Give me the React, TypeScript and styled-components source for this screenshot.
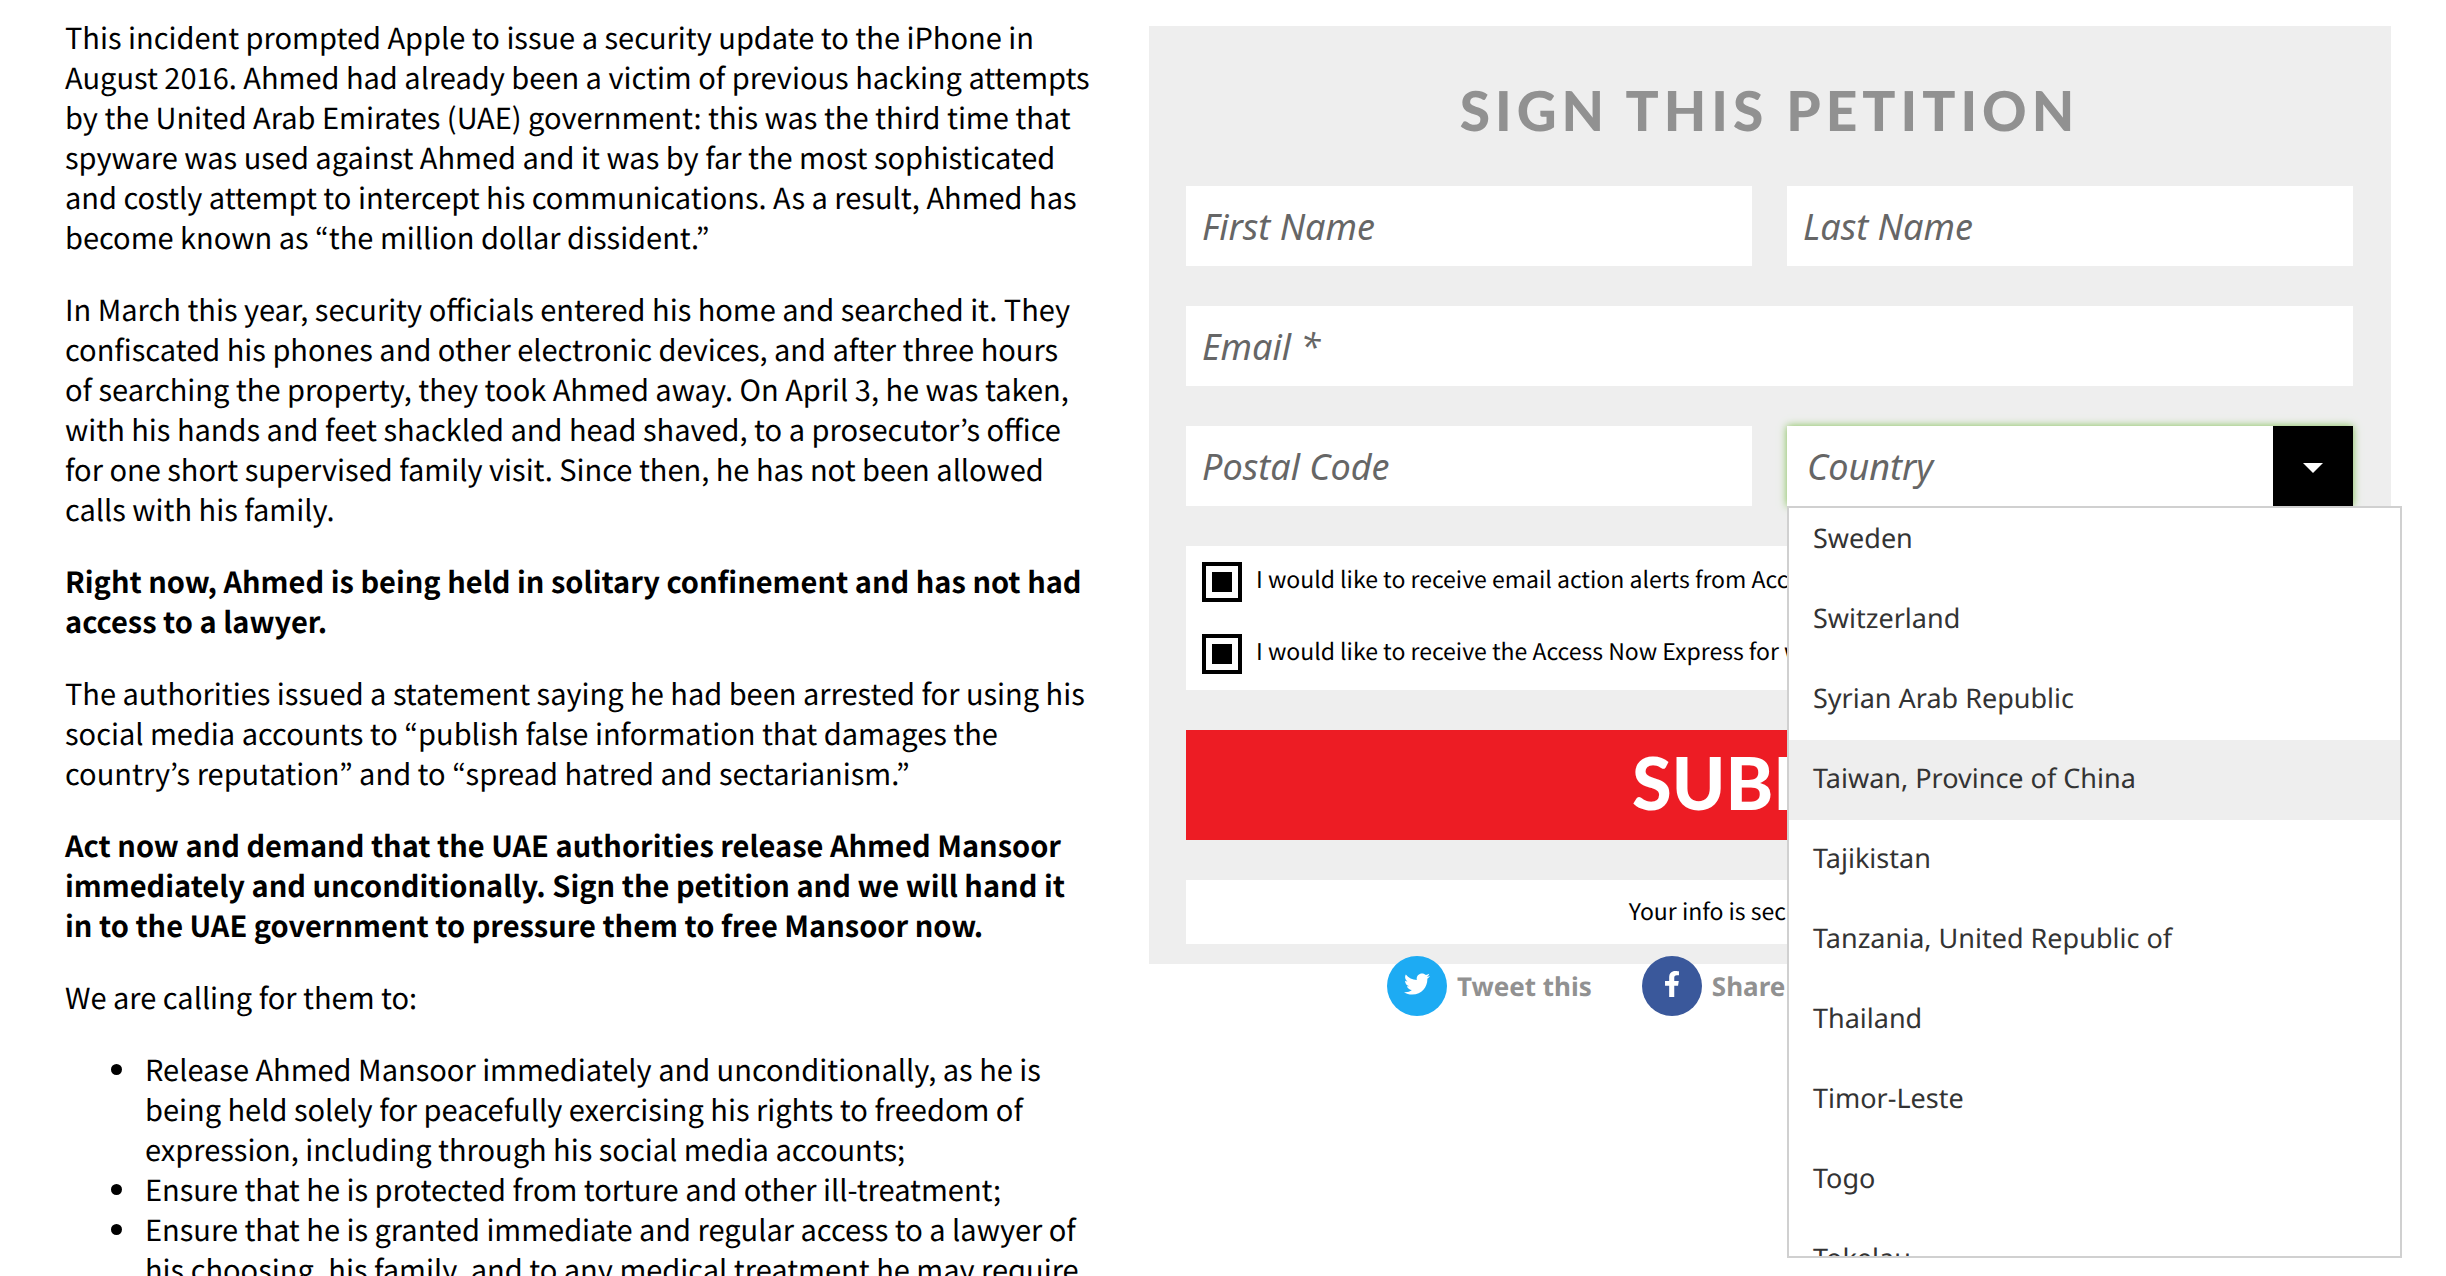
import React, { useLayoutEffect, useRef, useState } from "react";
import styled, { createGlobalStyle } from "styled-components";
import { FaFacebookF, FaTwitter } from "react-icons/fa";

const bodyFont = `"Noto Sans CJK KR", "Noto Sans", sans-serif`;
const formFont = `"Noto Sans", "Open Sans", sans-serif`;
const displayFont = `Lato, "Open Sans", sans-serif`;

const GlobalStyle = createGlobalStyle`
  html { scrollbar-width: none; }
  body {
    margin: 0;
    background: #fff;
    color: #000;
    font-family: ${bodyFont};
    text-rendering: geometricPrecision;
  }
  *, *::before, *::after { box-sizing: border-box; }
`;

const Page = styled.main`
  display: grid;
  grid-template-columns: 1032fr 1242fr;
  column-gap: 52px;
  align-items: start;
  padding: 0 55px 0 65px;
`;

const Article = styled.article`
  padding-top: 17px;
  font-size: 29px;
  line-height: 40px;
`;

const Paragraph = styled.p<{ $strong?: boolean }>`
  margin: 0 0 32px;
  font-weight: ${(p) => (p.$strong ? 700 : 400)};
`;

const Demands = styled.ul`
  margin: 0;
  padding-left: 75px;
  li { padding-left: 5px; }
`;

const Aside = styled.aside`
  padding-top: 26px;
`;

const Panel = styled.form`
  display: flex;
  flex-direction: column;
  gap: 40px;
  padding: 52px 38px 20px 37px;
  background: #eee;
`;

const Title = styled.h2`
  margin: 0;
  padding-bottom: 4px;
  font-family: ${displayFont};
  font-size: 55px;
  font-weight: 900;
  line-height: 64px;
  letter-spacing: 5px;
  text-align: center;
  text-transform: uppercase;
  color: #919191;
`;

const Row = styled.div`
  display: grid;
  grid-template-columns: 1fr 1fr;
  gap: 35px;
`;

const Field = styled.input`
  width: 100%;
  height: 80px;
  padding: 0 16px;
  border: 0;
  border-radius: 0;
  background: #fff;
  font-family: ${formFont};
  font-size: 36px;
  font-style: italic;
  color: #666;
  &::placeholder { color: #666; opacity: 1; }
`;

const CountryField = styled.div`
  position: relative;
  display: grid;
  grid-template-columns: 1fr 80px;
  background: #fff;
  box-shadow: 0 0 8px #7fc050;
`;

const CountrySelect = styled.select`
  appearance: none;
  width: 100%;
  height: 80px;
  padding: 0 20px;
  border: 0;
  border-radius: 0;
  outline: 0;
  background: #fff;
  font-family: ${formFont};
  font-size: 36px;
  font-style: italic;
  color: #666;
`;

const Toggle = styled.button`
  display: grid;
  place-items: center;
  padding: 4px 0 0;
  border: 0;
  background: #000;
  &::after {
    content: "";
    border: 10px solid transparent;
    border-top-color: #fff;
    border-bottom: 0;
  }
`;

const Menu = styled.ul`
  position: absolute;
  z-index: 2;
  top: 100%;
  left: 0;
  width: 615px;
  height: 752px;
  margin: 0;
  padding: 0;
  overflow-y: auto;
  scrollbar-width: none;
  list-style: none;
  background: #fff;
  border: 2px solid #d0d0d0;
`;

const Option = styled.li<{ $active: boolean }>`
  padding: 0 24px 4px;
  font-family: ${formFont};
  font-size: 27px;
  line-height: 76px;
  white-space: nowrap;
  color: #333;
  background: ${(p) => (p.$active ? "#eee" : "#fff")};
`;

const Consents = styled.div`
  display: flex;
  flex-direction: column;
  gap: 32px;
  padding: 16px;
  background: #fff;
`;

const Consent = styled.label`
  display: flex;
  align-items: flex-start;
  gap: 14px;
  height: 40px;
  font-size: 23px;
  line-height: 32px;
  white-space: nowrap;
`;

const Tick = styled.input`
  appearance: none;
  display: grid;
  place-items: center;
  flex: none;
  width: 40px;
  height: 40px;
  margin: 0;
  border: 4px solid #000;
  background: #fff;
  &:checked::before {
    content: "";
    width: 20px;
    height: 20px;
    background: #000;
  }
`;

const Submit = styled.button`
  height: 110px;
  padding: 0 0 6px;
  border: 0;
  background: #ed1c24;
  font-family: ${displayFont};
  font-size: 72px;
  font-weight: 900;
  line-height: 104px;
  color: #fff;
`;

const Note = styled.p`
  margin: 0;
  padding: 14px 16px 18px;
  background: #fff;
  font-size: 23px;
  line-height: 32px;
  text-align: center;
`;

const Social = styled.div`
  display: flex;
  gap: 50px;
  margin-top: -8px;
  padding-left: 238px;
`;

const SocialLink = styled.a`
  display: flex;
  align-items: center;
  gap: 10px;
  font-family: ${formFont};
  font-size: 26px;
  font-weight: 700;
  white-space: nowrap;
  text-decoration: none;
  color: #919191;
`;

const Badge = styled.span<{ $color: string }>`
  display: grid;
  place-items: center;
  width: 60px;
  height: 60px;
  padding-bottom: 4px;
  border-radius: 50%;
  background: ${(p) => p.$color};
  color: #fff;
`;

const countries = [
  "Sweden",
  "Switzerland",
  "Syrian Arab Republic",
  "Taiwan, Province of China",
  "Tajikistan",
  "Tanzania, United Republic of",
  "Thailand",
  "Timor-Leste",
  "Togo",
  "Tokelau",
  "Tonga",
];

function CountryPicker() {
  const menu = useRef<HTMLUListElement>(null);
  const [open, setOpen] = useState(true);
  const [value, setValue] = useState("");
  const [active, setActive] = useState("Taiwan, Province of China");

  useLayoutEffect(() => {
    if (menu.current) menu.current.scrollTop = 8;
  }, [open]);

  return (
    <CountryField>
      <CountrySelect aria-label="Country" value={value} onChange={(e) => setValue(e.target.value)}>
        <option value="">Country</option>
        {countries.map((c) => (
          <option key={c}>{c}</option>
        ))}
      </CountrySelect>
      <Toggle type="button" aria-label="Show countries" aria-expanded={open} onClick={() => setOpen(!open)} />
      {open && (
        <Menu ref={menu} role="listbox" aria-label="Countries">
          {countries.map((c) => (
            <Option
              key={c}
              role="option"
              aria-selected={c === value}
              $active={c === active}
              onMouseEnter={() => setActive(c)}
              onClick={() => {
                setValue(c);
                setOpen(false);
              }}
            >
              {c}
            </Option>
          ))}
        </Menu>
      )}
    </CountryField>
  );
}

export default function App() {
  return (
    <>
      <GlobalStyle />
      <Page>
        <Article>
          <Paragraph>
            This incident prompted Apple to issue a security update to the iPhone in August 2016. Ahmed had already
            been a victim of previous hacking attempts by the United Arab Emirates (UAE) government: this was the third
            time that spyware was used against Ahmed and it was by far the most sophisticated and costly attempt to
            intercept his communications. As a result, Ahmed has become known as “the million dollar dissident.”
          </Paragraph>
          <Paragraph>
            In March this year, security officials entered his home and searched it. They confiscated his phones and
            other electronic devices, and after three hours of&nbsp;searching the property, they took Ahmed away. On
            April 3, he was taken, with his hands and feet shackled and head shaved, to a prosecutor’s office for one
            short supervised family visit. Since then, he has not been allowed calls with his family.
          </Paragraph>
          <Paragraph $strong>
            Right now, Ahmed is being held in solitary confinement and has not had access to a lawyer.
          </Paragraph>
          <Paragraph>
            The authorities issued a statement saying he had been arrested for using his social media accounts to
            “publish false information that damages the country’s reputation” and to “spread hatred and sectarianism.”
          </Paragraph>
          <Paragraph $strong>
            Act now and demand that the UAE authorities release Ahmed Mansoor immediately and unconditionally. Sign the
            petition and we will hand it in&nbsp;to the UAE government to pressure them to free Mansoor now.
          </Paragraph>
          <Paragraph>We are calling for them to:</Paragraph>
          <Demands>
            <li>
              Release Ahmed Mansoor immediately and unconditionally, as he is being held solely for peacefully
              exercising his rights to freedom of expression, including through his social media accounts;
            </li>
            <li>Ensure that he is protected from torture and other ill-treatment;</li>
            <li>
              Ensure that he is granted immediate and regular access to a lawyer of his choosing, his family, and to
              any medical treatment he may require
            </li>
          </Demands>
        </Article>
        <Aside>
          <Panel onSubmit={(e) => e.preventDefault()}>
            <Title>Sign this petition</Title>
            <Row>
              <Field aria-label="First Name" placeholder="First Name" />
              <Field aria-label="Last Name" placeholder="Last Name" />
            </Row>
            <Field type="email" aria-label="Email" placeholder="Email *" />
            <Row>
              <Field aria-label="Postal Code" placeholder="Postal Code" />
              <CountryPicker />
            </Row>
            <Consents>
              <Consent>
                <Tick type="checkbox" defaultChecked />
                I would like to receive email action alerts from Access Now
              </Consent>
              <Consent>
                <Tick type="checkbox" defaultChecked />
                I would like to receive the Access Now Express for weekly news
              </Consent>
            </Consents>
            <Submit type="submit">SUBMIT</Submit>
            <Note>Your info is secure with us.</Note>
          </Panel>
          <Social>
            <SocialLink href="#tweet">
              <Badge $color="#1dabf3">
                <FaTwitter size={26} />
              </Badge>
              Tweet this
            </SocialLink>
            <SocialLink href="#share">
              <Badge $color="#3a589b">
                <FaFacebookF size={26} />
              </Badge>
              Share this
            </SocialLink>
          </Social>
        </Aside>
      </Page>
    </>
  );
}
